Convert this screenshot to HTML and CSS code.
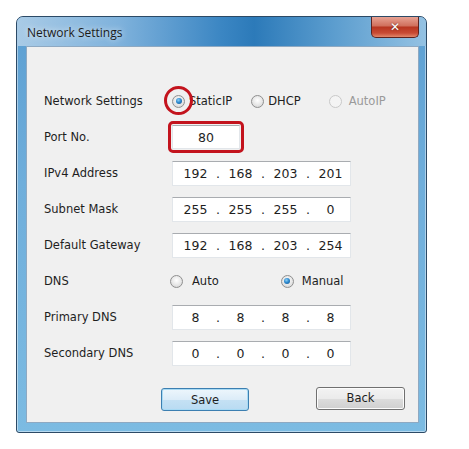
FILE: index.html
```html
<!DOCTYPE html>
<html lang="en">

<head>
    <meta charset="UTF-8">
    <title>Network Settings</title>
    <link rel="stylesheet" href="styles.css">
</head>

<body>
    <div class="window">
        <div class="titlebar">
            <span class="title">Network Settings</span>
            <button class="close" type="button">&#x2715;</button>
        </div>
        <div class="client">
            <div class="rows">
                <div class="row">
                    <span class="label">Network Settings</span>
                    <div class="options">
                        <label class="radio checked static">
                            <span class="dot"></span>StaticIP
                            <span class="mark-circle"></span>
                        </label>
                        <label class="radio dhcp"><span class="dot"></span>DHCP</label>
                        <label class="radio disabled autoip"><span class="dot"></span>AutoIP</label>
                    </div>
                </div>
                <div class="row">
                    <span class="label">Port No.</span>
                    <div class="port-mark">
                        <div class="port">80</div>
                    </div>
                </div>
                <div class="row">
                    <span class="label">IPv4 Address</span>
                    <div class="ip">
                        <span>192</span><i>.</i><span>168</span><i>.</i><span>203</span><i>.</i><span>201</span>
                    </div>
                </div>
                <div class="row">
                    <span class="label">Subnet Mask</span>
                    <div class="ip">
                        <span>255</span><i>.</i><span>255</span><i>.</i><span>255</span><i>.</i><span>0</span>
                    </div>
                </div>
                <div class="row">
                    <span class="label">Default Gateway</span>
                    <div class="ip">
                        <span>192</span><i>.</i><span>168</span><i>.</i><span>203</span><i>.</i><span>254</span>
                    </div>
                </div>
                <div class="row">
                    <span class="label">DNS</span>
                    <div class="options dns">
                        <label class="radio auto"><span class="dot"></span>Auto</label>
                        <label class="radio checked manual"><span class="dot"></span>Manual</label>
                    </div>
                </div>
                <div class="row">
                    <span class="label">Primary DNS</span>
                    <div class="ip">
                        <span>8</span><i>.</i><span>8</span><i>.</i><span>8</span><i>.</i><span>8</span>
                    </div>
                </div>
                <div class="row">
                    <span class="label">Secondary DNS</span>
                    <div class="ip">
                        <span>0</span><i>.</i><span>0</span><i>.</i><span>0</span><i>.</i><span>0</span>
                    </div>
                </div>
            </div>
            <div class="buttons">
                <button class="btn save" type="button">Save</button>
                <button class="btn back" type="button">Back</button>
            </div>
        </div>
    </div>
</body>

</html>
```

FILE: styles.css
```css
body {
    margin: 0;
    background-color: #fff;
    font-family: "DejaVu Sans", Arial, sans-serif;
    font-size: 11.5px;
    color: #1e1e1e;
}

.window {
    width: 411px;
    height: 417px;
    margin: 16px 0 0 16px;
    box-sizing: border-box;
    display: flex;
    flex-direction: column;
    border: 1px solid #2c4a66;
    border-radius: 7px 7px 3px 3px;
    background: linear-gradient(to bottom, #5c9fd2 0%, #6faedb 40%, #7cbbe2 100%);
    box-shadow: inset 0 0 0 1px rgba(255, 255, 255, 0.45);
    padding: 0 7px 9px 9px;
}

.titlebar {
    height: 29px;
    display: flex;
    align-items: flex-start;
    margin: 0 -7px 0 -9px;
    padding: 0 7px 0 9px;
    border-radius: 6px 6px 0 0;
    background: linear-gradient(to right, #a9cbe6 0%, #7fb2dc 25%, #3b86c3 50%, #2c7ab9 58%, #5d9ecf 78%, #94c2e3 100%);
}

.title {
    font-family: "Open Sans", "DejaVu Sans", sans-serif;
    font-size: 12px;
    color: #1b1b1b;
    margin-top: 7px;
    margin-left: 1px;
    text-shadow: 0 0 6px rgba(255, 255, 255, 0.9);
}

.close {
    margin-left: auto;
    width: 48px;
    height: 21px;
    margin-top: 0;
    margin-right: 0;
    border: 1px solid #5d2320;
    border-top: none;
    border-radius: 0 0 5px 5px;
    background: linear-gradient(to bottom, #e7a293 0%, #d06f5c 45%, #b73520 50%, #c84a34 80%, #e2876a 100%);
    color: #fff;
    font-family: "DejaVu Sans", sans-serif;
    font-weight: bold;
    font-size: 12px;
    line-height: 18px;
    padding: 0;
    text-shadow: 0 0 2px #5d2320;
}

.client {
    flex: 1;
    background-color: #f0f0f0;
    border: 1px solid #8ea9c2;
    padding: 36px 0 0 17px;
    display: flex;
    flex-direction: column;
}

.row {
    display: grid;
    grid-template-columns: 128px 1fr;
    align-items: center;
    height: 36px;
}

.options {
    display: flex;
    align-items: center;
    position: relative;
}

.radio {
    display: flex;
    align-items: center;
    gap: 4px;
    position: relative;
}

.radio .dot {
    width: 11px;
    height: 11px;
    border: 1px solid #8f8f8f;
    border-radius: 50%;
    background: radial-gradient(circle at 50% 40%, #fff 0%, #e6e6e6 55%, #cfcfcf 100%);
    box-sizing: content-box;
    position: relative;
}

.radio.checked .dot::after {
    content: "";
    position: absolute;
    left: 2.5px;
    top: 2.5px;
    width: 6px;
    height: 6px;
    border-radius: 50%;
    background: radial-gradient(circle at 40% 35%, #8fd1f5 0%, #2f8bd0 45%, #134f86 100%);
}

.radio.disabled {
    color: #9a9a9a;
}

.radio.disabled .dot {
    border-color: #c9c9c9;
    background: #f4f4f4;
}

.static {
    margin-left: 0;
}

.dhcp {
    margin-left: 19px;
}

.autoip {
    margin-left: 28px;
    gap: 7px;
}

.mark-circle {
    position: absolute;
    left: -8px;
    top: -8px;
    width: 23px;
    height: 23px;
    border: 3px solid #c3131d;
    border-radius: 50%;
}

.dns .auto {
    margin-left: -2px;
    gap: 9px;
}

.dns .manual {
    margin-left: 62px;
    gap: 8px;
}

.port-mark {
    margin-left: -4px;
    width: 68px;
    padding: 1px;
    border: 3px solid #c3131d;
    border-radius: 5px;
}

.port,
.ip {
    background-color: #fff;
    border: 1px solid #e2e6ea;
    border-top-color: #a9acb0;
    height: 23px;
    box-sizing: border-box;
    display: flex;
    align-items: center;
    justify-content: center;
    font-size: 12.5px;
}

.port {
    height: 24px;
}

.ip {
    width: 179px;
    height: 25px;
    justify-content: flex-start;
    padding-left: 4px;
}

.ip span {
    width: 37px;
    text-align: center;
}

.ip i {
    font-style: normal;
    width: 8px;
    text-align: center;
}

.buttons {
    display: flex;
    align-items: center;
    gap: 67px;
    margin-top: 17px;
    padding-left: 117px;
}

.btn {
    height: 23px;
    font-family: "DejaVu Sans", Arial, sans-serif;
    font-size: 11.5px;
    color: #1e1e1e;
    border-radius: 3px;
    padding: 0;
}

.save {
    width: 88px;
    border: 1px solid #3c7fb1;
    background: linear-gradient(to bottom, #edf6fc 0%, #dcecf8 50%, #c5e1f4 51%, #b9dbf2 100%);
    box-shadow: inset 0 0 0 1px #a8daf4;
}

.back {
    width: 89px;
    margin-top: -3px;
    border: 1px solid #707070;
    background: linear-gradient(to bottom, #f3f3f3 0%, #ebebeb 50%, #dddddd 51%, #cfcfcf 100%);
    box-shadow: inset 0 0 0 1px #fcfcfc;
}
```
